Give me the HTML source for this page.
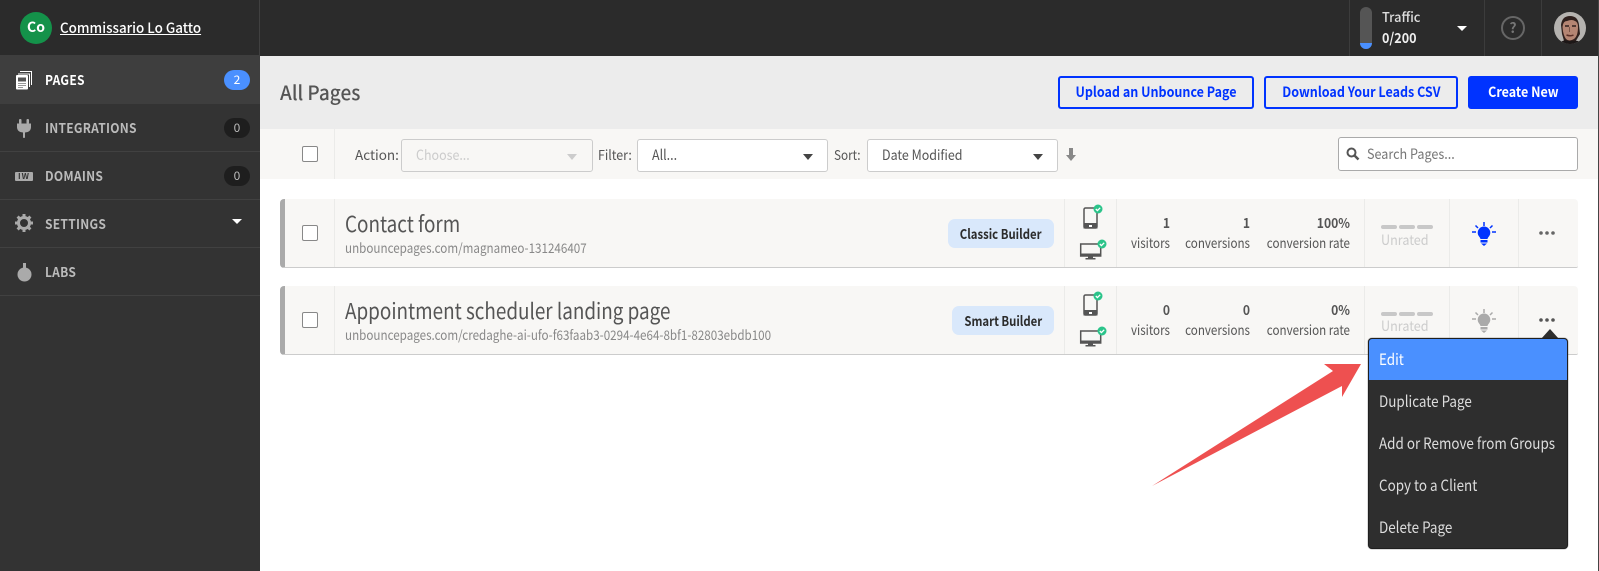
<!DOCTYPE html>
<html><head><meta charset="utf-8"><title>All Pages</title>
<style>
html,body{margin:0;padding:0;width:1599px;height:571px;overflow:hidden;background:#fff}
body{position:relative;font-family:"Noto Sans CJK SC","Liberation Sans",sans-serif;color:#555;font-size:14px}
.a{position:absolute;box-sizing:border-box}
.t{position:absolute;white-space:nowrap;line-height:20px;transform-origin:left center}
.r{text-align:right;transform-origin:right center}
.nav{font-weight:700;font-size:13.5px;color:#bbb;left:45px;letter-spacing:.3px;transform:scaleX(.89)}
.sep{position:absolute;left:0;width:260px;height:1px;background:#414141}
.pill{position:absolute;left:224px;width:26px;height:20px;border-radius:10px;background:#1e1e1e;color:#bbb;text-align:center;line-height:20px;font-size:12px}
.cb{position:absolute;left:302px;width:16px;height:16px;background:#fff;border:1px solid #888;border-radius:2px;box-sizing:border-box}
.btn{position:absolute;top:76px;height:33px;border:2px solid #0033ff;border-radius:3px;box-sizing:border-box;color:#0033ff;font-weight:700;font-size:14px;line-height:29px;text-align:center;white-space:nowrap}
.btn span,.badge span{display:inline-block;transform-origin:center}
.btn span{transform:scaleX(.895)}
.badge span{transform:scaleX(.84)}
.sel{position:absolute;top:139px;height:33px;background:#fff;border:1px solid #ccc;border-radius:3px;box-sizing:border-box;font-size:14px;line-height:31px;padding-left:14px;color:#555;white-space:nowrap}
.sel span{display:inline-block;transform:scaleX(.89);transform-origin:left center}
.car{position:absolute;top:154px;width:0;height:0;border-left:5px solid transparent;border-right:5px solid transparent;border-top:6px solid #444}
.row{position:absolute;left:280px;width:1298px;background:#f8f7f5;border-left:5px solid #aaa;border-bottom:1px solid #ccc;border-radius:4px 4px 2px 4px;box-sizing:border-box}
.v{position:absolute;width:1px;background:#ebebe9}
.title{font-size:22px;color:#555;left:345px;line-height:30px;transform:scaleX(.858)}
.url{font-size:13.5px;color:#888;left:345px;transform:scaleX(.862)}
.badge{position:absolute;background:#d9e8fb;border-radius:7px;color:#2c2c2c;font-weight:700;font-size:13.5px;text-align:center;white-space:nowrap;height:29px;line-height:28px}
.num{font-weight:700;color:#555;font-size:13.5px;width:120px;transform:scaleX(.9)}
.lab{color:#555;font-size:13.5px;width:140px;transform:scaleX(.86)}
.bar{position:absolute;height:4px;width:16px;background:#c8c8c8;border-radius:2px}
.un{left:1381px;color:#ccc;font-size:14px;transform:scaleX(.9)}
.item{position:absolute;left:1379px;color:#ddd;font-size:15.5px;white-space:nowrap;line-height:20px;transform:scaleX(.866);transform-origin:left center}
</style></head>
<body>
<!-- top bar -->
<div class="a" style="left:0;top:0;width:1598px;height:56px;background:#2b2b2b"></div>
<div class="a" style="left:1598px;top:0;width:1px;height:571px;background:#444"></div>
<div class="a" style="left:259px;top:0;width:1px;height:55px;background:#404040"></div>
<div class="a" style="left:1349px;top:0;width:1px;height:56px;background:#3c3c3c"></div>
<div class="a" style="left:1484px;top:0;width:1px;height:56px;background:#3c3c3c"></div>
<div class="a" style="left:1541px;top:0;width:1px;height:56px;background:#3c3c3c"></div>

<div class="a" style="left:20px;top:12px;width:32px;height:32px;border-radius:50%;background:#14924a;color:#fff;font-weight:700;font-size:14px;text-align:center;line-height:31px">Co</div>
<div class="t" style="left:60px;top:18px;color:#fff;font-size:14px;font-weight:500;text-decoration:underline;transform:scaleX(.958)">Commissario Lo Gatto</div>

<div class="a" style="left:1360px;top:7px;width:12px;height:42px;border-radius:6px;background:#555;overflow:hidden"><div class="a" style="left:0;bottom:0;width:12px;height:6px;background:#4a90ff"></div></div>
<div class="t" style="left:1382px;top:6px;color:#ddd;font-size:13.5px;font-weight:500;transform:scaleX(.95)">Traffic</div>
<div class="t" style="left:1382px;top:28px;color:#eee;font-size:14px;font-weight:700;transform:scaleX(.9)">0/200</div>
<div class="a" style="left:1457px;top:26px;width:0;height:0;border-left:5px solid transparent;border-right:5px solid transparent;border-top:5px solid #fff"></div>
<div class="a" style="left:1501px;top:16px;width:24px;height:24px;border:2px solid #666;border-radius:50%;color:#777;font-weight:700;font-size:14px;line-height:20px;text-align:center">?</div>
<svg class="a" style="left:1554px;top:12px" width="32" height="32" viewBox="0 0 32 32">
<defs><clipPath id="av"><circle cx="16" cy="16" r="16"/></clipPath></defs>
<g clip-path="url(#av)"><rect width="32" height="32" fill="#b5b3b0"/>
<path d="M7 13Q8 4 16 4Q24 4 25 13L26 22L20 32H11L8 22Z" fill="#2e1f1c"/>
<path d="M8.500 15Q9 9 13 9Q18 7 21 9Q24 10 24 15Q24 24 20 27Q15 30 12 27Q9 23 8.500 15Z" fill="#b58573"/>
<path d="M11 14h4M18 14h4" stroke="#2e1f1c" stroke-width="1.500"/><path d="M15.500 15v5" stroke="#7d5648"/><path d="M12.500 23q4 1.500 7 0" stroke="#5b2f27" stroke-width="1.500" fill="none"/>
<path d="M5 32Q9 27 14 29H20Q25 28 28 32Z" fill="#1c1717"/></g></svg>

<!-- sidebar -->
<div class="a" style="left:0;top:55px;width:260px;height:516px;background:#333"></div>
<div class="a" style="left:0;top:55px;width:260px;height:49px;background:#3e3e3e"></div>
<div class="sep" style="top:151px"></div><div class="sep" style="top:199px"></div><div class="sep" style="top:247px"></div><div class="sep" style="top:295px"></div>

<svg class="a" style="left:15px;top:70px" width="18" height="20" viewBox="0 0 18 20">
<path d="M5 1.500H16.500V15" fill="none" stroke="#fff" stroke-width="1"/><path d="M3 4H14.500V17" fill="none" stroke="#fff" stroke-width="1"/>
<rect x="1" y="5" width="12" height="14.500" rx="1" fill="#fff"/><rect x="3" y="7.500" width="8" height="4" fill="#555"/><path d="M3 13.500h8M3 15.500h8M3 17.500h5" stroke="#999" stroke-width="1"/></svg>
<div class="t nav" style="top:69px;color:#fff">PAGES</div>
<div class="pill" style="top:70px;background:#4a90ff;color:#fff">2</div>

<svg class="a" style="left:16px;top:118px" width="16" height="20" viewBox="0 0 16 20" fill="#aaa">
<rect x="3" y="1" width="2.500" height="5" rx="1"/><rect x="10.500" y="1" width="2.500" height="5" rx="1"/>
<path d="M1 5.500H15V9Q15 14 9 14.500V19.500Q8 20.500 7 19.500V14.500Q1 14 1 9Z"/></svg>
<div class="t nav" style="top:117px">INTEGRATIONS</div>
<div class="pill" style="top:118px">0</div>

<div class="a" style="left:15px;top:172px;width:18px;height:9px;background:#aaa;border-radius:1px;color:#333;font-size:8px;font-weight:700;line-height:9px;text-align:center;letter-spacing:1px">IW</div>
<div class="t nav" style="top:165px">DOMAINS</div>
<div class="pill" style="top:166px">0</div>

<svg class="a" style="left:15px;top:214px" width="18" height="18" viewBox="0 0 18 18">
<circle cx="9" cy="9" r="5.500" fill="none" stroke="#aaa" stroke-width="3"/>
<g stroke="#aaa" stroke-width="3"><path d="M9 0v3M9 15v3M0 9h3M15 9h3M2.600 2.600l2.100 2.100M13.300 13.300l2.100 2.100M2.600 15.400l2.100-2.100M13.300 4.700l2.100-2.100"/></g></svg>
<div class="t nav" style="top:213px">SETTINGS</div>
<div class="a" style="left:232px;top:219px;width:0;height:0;border-left:5px solid transparent;border-right:5px solid transparent;border-top:5px solid #fff"></div>

<svg class="a" style="left:17px;top:262px" width="15" height="20" viewBox="0 0 15 20" fill="#aaa">
<rect x="6" y="1" width="3" height="7"/><circle cx="7.500" cy="12.500" r="7"/></svg>
<div class="t nav" style="top:261px">LABS</div>

<!-- title bar -->
<div class="a" style="left:260px;top:56px;width:1338px;height:73px;background:#ececec"></div>
<div class="t" style="left:280px;top:77px;font-size:20px;line-height:30px;color:#555;font-weight:500;transform:scaleX(.95)">All Pages</div>
<div class="btn" style="left:1058px;width:196px"><span>Upload an Unbounce Page</span></div>
<div class="btn" style="left:1264px;width:194px"><span>Download Your Leads CSV</span></div>
<div class="btn" style="left:1468px;width:110px;background:#0033ff;color:#fff"><span>Create New</span></div>

<!-- toolbar -->
<div class="a" style="left:260px;top:129px;width:1338px;height:50px;background:#f8f7f5"></div>
<div class="v" style="left:334px;top:129px;height:50px"></div>
<div class="cb" style="top:146px"></div>
<div class="t" style="left:355px;top:144px;font-size:13.5px">Action:</div>
<div class="sel" style="left:401px;width:192px;background:#f8f7f5;color:#ccc"><span>Choose...</span></div>
<div class="car" style="left:567px;border-top-color:#ccc"></div>
<div class="t" style="left:598px;top:144px;font-size:13.5px;transform:scaleX(.92)">Filter:</div>
<div class="sel" style="left:637px;width:191px"><span>All...</span></div>
<div class="car" style="left:803px"></div>
<div class="t" style="left:834px;top:144px;font-size:13.5px;transform:scaleX(.87)">Sort:</div>
<div class="sel" style="left:867px;width:191px"><span>Date Modified</span></div>
<div class="car" style="left:1033px"></div>
<svg class="a" style="left:1066px;top:148px" width="10" height="14" viewBox="0 0 10 14"><path d="M3 0H7V7H10L5 13L0 7H3Z" fill="#888"/></svg>
<div class="a" style="left:1338px;top:137px;width:240px;height:34px;background:#fff;border:1px solid #aaa;border-radius:3px"></div>
<svg class="a" style="left:1346px;top:147px" width="14" height="14" viewBox="0 0 14 14"><circle cx="5.500" cy="5.500" r="4" fill="none" stroke="#555" stroke-width="2"/><path d="M8.500 8.500L12.500 12.500" stroke="#555" stroke-width="2.500"/></svg>
<div class="t" style="left:1367px;top:144px;color:#777;font-size:14px;transform:scaleX(.9)">Search Pages...</div>

<!-- rows -->
<div class="row" style="top:199px;height:69px"></div>
<div class="row" style="top:286px;height:69px"></div>
<div class="v" style="left:334px;top:199px;height:68px"></div><div class="v" style="left:334px;top:286px;height:68px"></div>
<div class="v" style="left:1064px;top:199px;height:68px"></div><div class="v" style="left:1064px;top:286px;height:68px"></div>
<div class="v" style="left:1116px;top:199px;height:68px"></div><div class="v" style="left:1116px;top:286px;height:68px"></div>
<div class="v" style="left:1364px;top:199px;height:68px"></div><div class="v" style="left:1364px;top:286px;height:68px"></div>
<div class="v" style="left:1449px;top:199px;height:68px"></div><div class="v" style="left:1449px;top:286px;height:68px"></div>
<div class="v" style="left:1518px;top:199px;height:68px"></div><div class="v" style="left:1518px;top:286px;height:68px"></div>

<div class="cb" style="top:225px"></div>
<div class="t title" style="top:208px">Contact form</div>
<div class="t url" style="top:237px">unbouncepages.com/magnameo-131246407</div>
<div class="badge" style="left:948px;top:219px;width:106px"><span>Classic Builder</span></div>

<div class="cb" style="top:312px"></div>
<div class="t title" style="top:295px">Appointment scheduler landing page</div>
<div class="t url" style="top:324px">unbouncepages.com/credaghe-ai-ufo-f63faab3-0294-4e64-8bf1-82803ebdb100</div>
<div class="badge" style="left:952px;top:306px;width:102px"><span>Smart Builder</span></div>

<!-- device icons -->
<svg class="a" style="left:1078px;top:203px" width="32" height="58" viewBox="0 0 32 58">
<rect x="6" y="5" width="13" height="20" rx="1.500" fill="#f8f7f5" stroke="#555" stroke-width="1.500"/><rect x="5.500" y="20" width="14" height="5.500" fill="#555"/><rect x="11" y="22" width="3" height="2" fill="#fff"/>
<circle cx="20" cy="6" r="4.500" fill="#2bc48a"/><path d="M17.800 6l1.600 1.600 2.800-2.800" stroke="#fff" stroke-width="1.300" fill="none"/>
<rect x="2.700" y="41" width="20" height="12" fill="#f8f7f5" stroke="#555" stroke-width="1.500"/><rect x="2" y="50.500" width="21" height="2.500" fill="#555"/><rect x="10" y="53" width="5" height="2" fill="#555"/><rect x="7.500" y="55" width="10" height="1.500" fill="#555"/>
<circle cx="24" cy="41" r="4.500" fill="#2bc48a"/><path d="M21.800 41l1.600 1.600 2.800-2.800" stroke="#fff" stroke-width="1.300" fill="none"/></svg>
<svg class="a" style="left:1078px;top:290px" width="32" height="58" viewBox="0 0 32 58">
<rect x="6" y="5" width="13" height="20" rx="1.500" fill="#f8f7f5" stroke="#555" stroke-width="1.500"/><rect x="5.500" y="20" width="14" height="5.500" fill="#555"/><rect x="11" y="22" width="3" height="2" fill="#fff"/>
<circle cx="20" cy="6" r="4.500" fill="#2bc48a"/><path d="M17.800 6l1.600 1.600 2.800-2.800" stroke="#fff" stroke-width="1.300" fill="none"/>
<rect x="2.700" y="41" width="20" height="12" fill="#f8f7f5" stroke="#555" stroke-width="1.500"/><rect x="2" y="50.500" width="21" height="2.500" fill="#555"/><rect x="10" y="53" width="5" height="2" fill="#555"/><rect x="7.500" y="55" width="10" height="1.500" fill="#555"/>
<circle cx="24" cy="41" r="4.500" fill="#2bc48a"/><path d="M21.800 41l1.600 1.600 2.800-2.800" stroke="#fff" stroke-width="1.300" fill="none"/></svg>

<!-- stats row 1 -->
<div class="t r num" style="left:1050px;top:212px">1</div>
<div class="t r lab" style="left:1030px;top:232px">visitors</div>
<div class="t r num" style="left:1130px;top:212px">1</div>
<div class="t r lab" style="left:1110px;top:232px">conversions</div>
<div class="t r num" style="left:1230px;top:212px">100%</div>
<div class="t r lab" style="left:1210px;top:232px">conversion rate</div>
<!-- stats row 2 -->
<div class="t r num" style="left:1050px;top:299px">0</div>
<div class="t r lab" style="left:1030px;top:319px">visitors</div>
<div class="t r num" style="left:1130px;top:299px">0</div>
<div class="t r lab" style="left:1110px;top:319px">conversions</div>
<div class="t r num" style="left:1230px;top:299px">0%</div>
<div class="t r lab" style="left:1210px;top:319px">conversion rate</div>

<!-- rating -->
<div class="bar" style="left:1381px;top:225px"></div><div class="bar" style="left:1399px;top:225px"></div><div class="bar" style="left:1417px;top:225px"></div>
<div class="t un" style="top:230px">Unrated</div>
<div class="bar" style="left:1381px;top:312px"></div><div class="bar" style="left:1399px;top:312px"></div><div class="bar" style="left:1417px;top:312px"></div>
<div class="t un" style="top:316px">Unrated</div>

<!-- bulbs -->
<svg class="a" style="left:1472px;top:221px" width="24" height="26" viewBox="0 0 24 26" fill="#0033ff">
<path d="M12 1v4M3.500 4.500l2.500 2.500M20.500 4.500l-2.500 2.500M0 11h4M20 11h4" stroke="#0033ff" stroke-width="1.500"/>
<path d="M12 5.500a6.300 6.300 0 0 1 6.300 6.300c0 3-2.300 4.200-2.800 6.200h-7c-.5-2-2.800-3.200-2.800-6.200A6.300 6.300 0 0 1 12 5.500Z"/><rect x="8.500" y="19" width="7" height="2.500"/><path d="M9 22.500h6L12 25Z"/></svg>
<svg class="a" style="left:1472px;top:308px" width="24" height="26" viewBox="0 0 24 26" fill="#aaa">
<path d="M12 1v4M3.500 4.500l2.500 2.500M20.500 4.500l-2.500 2.500M0 11h4M20 11h4" stroke="#aaa" stroke-width="1.500"/>
<path d="M12 5.500a6.300 6.300 0 0 1 6.300 6.300c0 3-2.300 4.200-2.800 6.200h-7c-.5-2-2.800-3.200-2.800-6.200A6.300 6.300 0 0 1 12 5.500Z"/><rect x="8.500" y="19" width="7" height="2.500"/><path d="M9 22.500h6L12 25Z"/></svg>

<!-- dots -->
<svg class="a" style="left:1538px;top:230px" width="18" height="6" viewBox="0 0 18 6" fill="#666"><circle cx="3" cy="3" r="1.800"/><circle cx="9" cy="3" r="1.800"/><circle cx="15" cy="3" r="1.800"/></svg>
<svg class="a" style="left:1538px;top:317px" width="18" height="6" viewBox="0 0 18 6" fill="#555"><circle cx="3" cy="3" r="1.800"/><circle cx="9" cy="3" r="1.800"/><circle cx="15" cy="3" r="1.800"/></svg>

<!-- arrow -->
<svg class="a" style="left:0;top:0" width="1599" height="571"><polygon points="1152,486 1333,371 1324,364 1361,364 1342,397 1342,386" fill="#ee5050"/></svg>

<!-- dropdown -->
<div class="a" style="left:1541px;top:329px;width:0;height:0;border-left:9px solid transparent;border-right:9px solid transparent;border-bottom:10px solid #2e2e2e"></div>
<div class="a" style="left:1368px;top:338px;width:200px;height:211px;background:#2e2e2e;border:1px solid #1f1f1f;border-radius:4px;box-shadow:0 0 1px #222;overflow:hidden">
<div class="a" style="left:0;top:0;width:198px;height:41px;background:#4a90ff"></div></div>
<div class="item" style="top:349px;color:#fff">Edit</div>
<div class="item" style="top:391px">Duplicate Page</div>
<div class="item" style="top:433px">Add or Remove from Groups</div>
<div class="item" style="top:475px">Copy to a Client</div>
<div class="item" style="top:517px">Delete Page</div>
</body></html>
